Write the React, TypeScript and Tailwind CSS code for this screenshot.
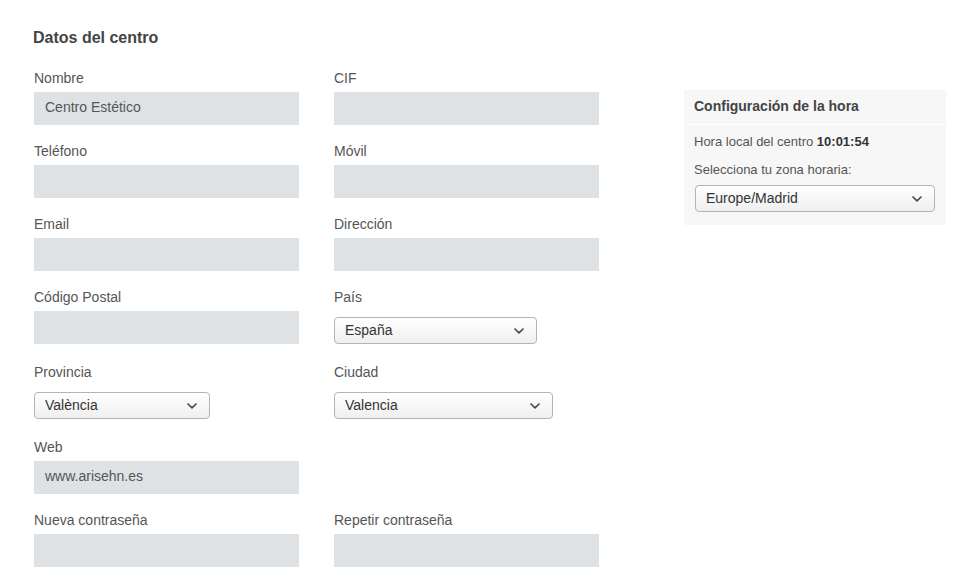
import React from "react";

type Field = {
  label: string;
  value?: string;
  kind?: "input" | "select";
  width?: string;
};

const rows: (Field | null)[][] = [
  [{ label: "Nombre", value: "Centro Estético" }, { label: "CIF" }],
  [{ label: "Teléfono" }, { label: "Móvil" }],
  [{ label: "Email" }, { label: "Dirección" }],
  [{ label: "Código Postal" }, { label: "País", kind: "select", value: "España", width: "w-[203px]" }],
  [
    { label: "Provincia", kind: "select", value: "València", width: "w-[176px]" },
    { label: "Ciudad", kind: "select", value: "Valencia", width: "w-[219px]" },
  ],
  [{ label: "Web", value: "www.arisehn.es" }, null],
  [{ label: "Nueva contraseña" }, { label: "Repetir contraseña" }],
];

function Chevron() {
  return (
    <svg width="10" height="6" viewBox="0 0 10 6" fill="none" className="shrink-0 mr-[2px]">
      <path d="M1 1 5 4.8 9 1" stroke="#4a4a4a" strokeWidth="1.7" strokeLinecap="round" strokeLinejoin="round" />
    </svg>
  );
}

function FakeSelect({ value, width }: { value: string; width: string }) {
  return (
    <div
      className={`${width} h-[27px] flex items-center justify-between pl-[10px] pr-[10px] rounded-[4px] border border-[#b4b4b4] bg-gradient-to-b from-white to-[#efefef] text-[14px] text-[#333]`}
    >
      <span>{value}</span>
      <Chevron />
    </div>
  );
}

function FormField({ field }: { field: Field }) {
  return (
    <div className="flex flex-col">
      <label className="h-5 leading-5 text-[14px] text-[#555]">{field.label}</label>
      {field.kind === "select" ? (
        <div className="mt-[10px] mb-[2px]">
          <FakeSelect value={field.value ?? ""} width={field.width ?? "w-[200px]"} />
        </div>
      ) : (
        <div className="mt-1 h-[33px] w-[265px] bg-[#dfe2e5] flex items-center pl-[11px] pb-[3px] text-[14px] text-[#555]">
          {field.value}
        </div>
      )}
    </div>
  );
}

export default function App() {
  return (
    <div className="min-h-[582px] w-[964px] bg-white flex font-['Liberation_Sans',Arial,sans-serif]">
      {/* datos del centro */}
      <div className="pl-[33px] pt-[28px]">
        <h2 className="h-5 leading-5 text-[16px] font-bold text-[#444]">Datos del centro</h2>
        <div className="mt-[20px] pl-px grid grid-cols-[265px_265px] gap-x-[35px] gap-y-4">
          {rows.map((row, i) =>
            row.map((f, j) => (f ? <FormField key={`${i}-${j}`} field={f} /> : <div key={`${i}-${j}`} />))
          )}
        </div>
      </div>

      {/* hora */}
      <div className="ml-[85px] mt-[90px] w-[262px] h-fit bg-[#f7f7f7]">
        <div className="h-[35px] pt-[6px] px-[10px] border-b border-white">
          <h3 className="leading-5 text-[14px] font-bold text-[#444]">Configuración de la hora</h3>
        </div>
        <div className="px-[10px] pt-[8px] pb-[13px] text-[13px] text-[#555]">
          <p className="leading-[18px]">
            Hora local del centro <b className="text-[#333]">10:01:54</b>
          </p>
          <p className="mt-[10px] leading-[18px]">Selecciona tu zona horaria:</p>
          <div className="mt-[6px] pl-px">
            <FakeSelect value="Europe/Madrid" width="w-[240px]" />
          </div>
        </div>
      </div>
    </div>
  );
}
